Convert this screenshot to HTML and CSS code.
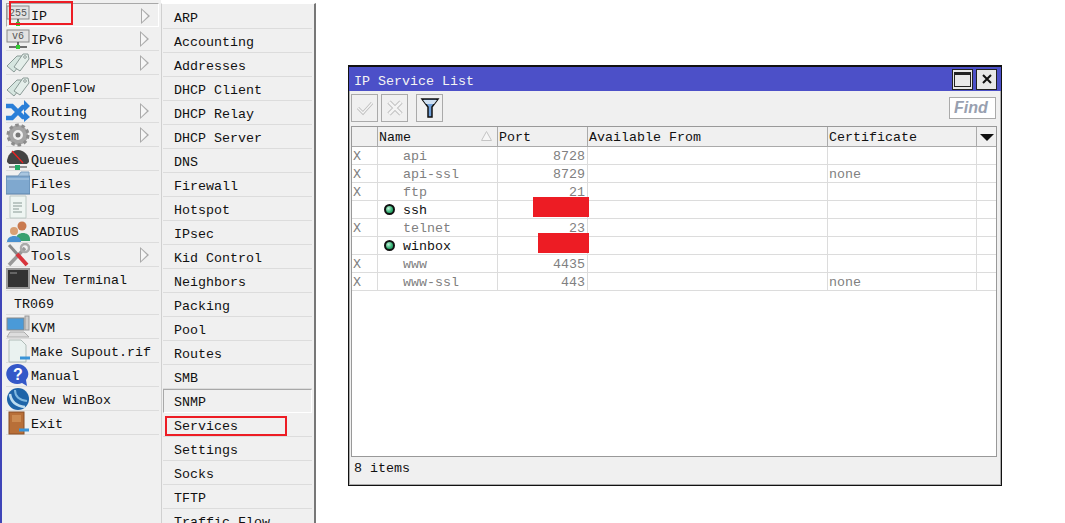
FILE: index.html
```html
<!DOCTYPE html>
<html lang="en">
<head>
  <meta charset="UTF-8">
  <title>IP Service List</title>
  <link rel="stylesheet" href="styles.css">
</head>
<body>
  <div class="menu main-menu">
    <div class="item hover">
      <svg class="icon" viewBox="0 0 24 24"><rect x="1" y="3" width="22" height="13" fill="#e2e2e2" stroke="#888"/><text x="12" y="13" class="icon-text">255</text><path d="M12 16v5M3 21h18" stroke="#444" stroke-width="1.5"/><rect x="10" y="19" width="4" height="4" fill="#3c3"/></svg>
      <span>IP</span><i class="arrow"></i><b class="mark mark-ip"></b>
    </div>
    <div class="item">
      <svg class="icon" viewBox="0 0 24 24"><rect x="1" y="3" width="22" height="12" fill="#e2e2e2" stroke="#888"/><text x="12" y="12" class="icon-text">v6</text><path d="M12 15v6M3 20h18" stroke="#444" stroke-width="1.5"/><rect x="10" y="18" width="4" height="4" fill="#3c3"/></svg>
      <span>IPv6</span><i class="arrow"></i>
    </div>
    <div class="item">
      <svg class="icon" viewBox="0 0 24 24"><path d="M1 15 11 5h5l1 5-9 11z" fill="#d6e6e0" stroke="#8a9a96"/><path d="M8 16 17 3h5l1 5-9 12z" fill="#e4eeea" stroke="#8a9a96"/><circle cx="19" cy="6" r="1.3" fill="#fff" stroke="#8a9a96"/></svg>
      <span>MPLS</span><i class="arrow"></i>
    </div>
    <div class="item">
      <svg class="icon" viewBox="0 0 24 24"><path d="M1 15 11 5h5l1 5-9 11z" fill="#d6e6e0" stroke="#8a9a96"/><path d="M8 16 17 3h5l1 5-9 12z" fill="#e4eeea" stroke="#8a9a96"/><circle cx="19" cy="6" r="1.3" fill="#fff" stroke="#8a9a96"/></svg>
      <span>OpenFlow</span>
    </div>
    <div class="item">
      <svg class="icon" viewBox="0 0 24 24"><path d="M0 7h6l11 11h2M0 19h6L17 8h2" fill="none" stroke="#2a7fd8" stroke-width="4.5"/><path d="M18 1l6 6-6 6zM18 12l6 6-6 5z" fill="#2a7fd8"/></svg>
      <span>Routing</span><i class="arrow"></i>
    </div>
    <div class="item">
      <svg class="icon" viewBox="0 0 24 24"><circle cx="12" cy="12" r="7.5" fill="none" stroke="#a4a4a4" stroke-width="5"/><circle cx="12" cy="12" r="10" fill="none" stroke="#8c8c8c" stroke-width="3" stroke-dasharray="3.5 2.8"/><circle cx="12" cy="12" r="2.5" fill="#777"/></svg>
      <span>System</span><i class="arrow"></i>
    </div>
    <div class="item">
      <svg class="icon" viewBox="0 0 24 24"><path d="M1 15a11 12 0 0 1 22 0l-2 2H3z" fill="#444"/><path d="M6 4l11 12" stroke="#e22" stroke-width="1.3"/><path d="M3 20h18" stroke="#333"/><rect x="9" y="18" width="5" height="5" fill="#2a6"/></svg>
      <span>Queues</span>
    </div>
    <div class="item">
      <svg class="icon" viewBox="0 0 24 24"><path d="M0 5h24v18H0z" fill="#7fa8cf" stroke="#5f86ad"/><path d="M12 5l3-4h8v4z" fill="#a9c6e0" stroke="#7fa0c0"/><path d="M1 8h22" stroke="#b8d0e6"/></svg>
      <span>Files</span>
    </div>
    <div class="item">
      <svg class="icon" viewBox="0 0 24 24"><path d="M4 1h16v22H4z" fill="#eef5f2" stroke="#bcc8c4"/><path d="M7 8h9M7 11h9M7 14h6M7 17h9" stroke="#aab8b4" stroke-width="1.5"/></svg>
      <span>Log</span>
    </div>
    <div class="item">
      <svg class="icon" viewBox="0 0 24 24"><circle cx="16" cy="7" r="4.5" fill="#c97a50"/><path d="M10 20c0-8 14-8 14 0v2H12z" fill="#3aa070"/><circle cx="8" cy="12" r="4" fill="#d9a074"/><path d="M1 23c0-8 14-8 14 0z" fill="#4a90d0"/></svg>
      <span>RADIUS</span>
    </div>
    <div class="item">
      <svg class="icon" viewBox="0 0 24 24"><path d="M3 22L19 5" stroke="#999" stroke-width="3.5"/><circle cx="19" cy="5" r="4" fill="none" stroke="#aaa" stroke-width="2.5"/><path d="M3 2l9 10" stroke="#888" stroke-width="3"/><path d="M11 11l10 11" stroke="#d8343c" stroke-width="4"/></svg>
      <span>Tools</span><i class="arrow"></i>
    </div>
    <div class="item">
      <svg class="icon" viewBox="0 0 24 24"><rect x="1" y="2" width="22" height="19" fill="#333" stroke="#999" stroke-width="2"/><path d="M4 6h7" stroke="#999"/></svg>
      <span>New Terminal</span>
    </div>
    <div class="item no-icon"><span>TR069</span></div>
    <div class="item">
      <svg class="icon" viewBox="0 0 24 24"><rect x="1" y="3" width="17" height="12" fill="#4a9ad8" stroke="#888"/><rect x="19" y="1" width="4" height="14" fill="#ccc" stroke="#999"/><path d="M1 22l3-5h14l5 5z" fill="#ddd" stroke="#aaa"/></svg>
      <span>KVM</span>
    </div>
    <div class="item">
      <svg class="icon" viewBox="0 0 24 24"><path d="M3 1h12l5 5v17H3z" fill="#eaf2f0" stroke="#b0bcb8"/><path d="M14 19h10" stroke="#3a94d8" stroke-width="3"/></svg>
      <span>Make Supout.rif</span>
    </div>
    <div class="item">
      <svg class="icon" viewBox="0 0 24 24"><path d="M12 1a11 10 0 1 0 4 19l5 3-1-6A11 10 0 0 0 12 1z" fill="#3458c8"/><text x="12" y="17" class="icon-help">?</text></svg>
      <span>Manual</span>
    </div>
    <div class="item">
      <svg class="icon" viewBox="0 0 24 24"><circle cx="12" cy="12" r="11" fill="#1e64a8"/><path d="M4 7c1 8 6 12 15 13" fill="none" stroke="#bcdcf0" stroke-width="2.5"/><path d="M9 3c0 6 4 10 12 11" fill="none" stroke="#7fb8e0" stroke-width="2"/></svg>
      <span>New WinBox</span>
    </div>
    <div class="item">
      <svg class="icon" viewBox="0 0 24 24"><rect x="3" y="1" width="15" height="22" fill="#b86f38" stroke="#8a4f24"/><rect x="6" y="4" width="9" height="7" fill="#cc8a50"/><path d="M13 19h10" stroke="#3a94d8" stroke-width="3"/></svg>
      <span>Exit</span>
    </div>
  </div>

  <div class="menu sub-menu">
    <div class="item">ARP</div>
    <div class="item">Accounting</div>
    <div class="item">Addresses</div>
    <div class="item">DHCP Client</div>
    <div class="item">DHCP Relay</div>
    <div class="item">DHCP Server</div>
    <div class="item">DNS</div>
    <div class="item">Firewall</div>
    <div class="item">Hotspot</div>
    <div class="item">IPsec</div>
    <div class="item">Kid Control</div>
    <div class="item">Neighbors</div>
    <div class="item">Packing</div>
    <div class="item">Pool</div>
    <div class="item">Routes</div>
    <div class="item">SMB</div>
    <div class="item hover">SNMP</div>
    <div class="item">Services<b class="mark mark-services"></b></div>
    <div class="item">Settings</div>
    <div class="item">Socks</div>
    <div class="item">TFTP</div>
    <div class="item">Traffic Flow</div>
  </div>

  <div class="window">
    <div class="titlebar">
      <span class="title">IP Service List</span>
      <div class="win-btn"><i class="max-glyph"></i></div>
      <div class="win-btn">
        <svg viewBox="0 0 12 12" width="12" height="12"><path d="M2 2l8 8M10 2l-8 8" stroke="#111" stroke-width="2"/></svg>
      </div>
    </div>
    <div class="toolbar">
      <div class="tool">
        <svg viewBox="0 0 20 20" width="20" height="20"><path d="M3 10l5 5 9-10" fill="none" stroke="#bbb" stroke-width="3"/><path d="M3 10l5 5 9-10" fill="none" stroke="#f4f4f4" stroke-width="1.4"/></svg>
      </div>
      <div class="tool">
        <svg viewBox="0 0 20 20" width="20" height="20"><path d="M4 4l12 12M16 4L4 16" stroke="#bbb" stroke-width="4.5"/><path d="M4 4l12 12M16 4L4 16" stroke="#f4f4f4" stroke-width="2.5"/></svg>
      </div>
      <div class="tool tool-filter">
        <svg viewBox="0 0 20 24" width="20" height="24"><path d="M2 3h16l-6 8v10H8V11z" fill="#6f9fd8" stroke="#111" stroke-width="1.5"/><path d="M3 4h14l-3 4H6z" fill="#cfe0f2"/></svg>
      </div>
      <div class="find">Find</div>
    </div>
    <div class="table">
      <div class="row head">
        <div class="cell"></div>
        <div class="cell">Name
          <svg class="sort" viewBox="0 0 11 10" width="11" height="10"><path d="M5.5 .5l5 9H.5z" fill="#f6f6f6" stroke="#c4c4c4"/></svg>
        </div>
        <div class="cell">Port</div>
        <div class="cell">Available From</div>
        <div class="cell">Certificate</div>
        <div class="cell"><i class="drop-arrow"></i></div>
      </div>
      <div class="row off">
        <div class="cell">X</div><div class="cell name">api</div><div class="cell port">8728</div><div class="cell"></div><div class="cell"></div><div class="cell"></div>
      </div>
      <div class="row off">
        <div class="cell">X</div><div class="cell name">api-ssl</div><div class="cell port">8729</div><div class="cell"></div><div class="cell">none</div><div class="cell"></div>
      </div>
      <div class="row off">
        <div class="cell">X</div><div class="cell name">ftp</div><div class="cell port">21</div><div class="cell"></div><div class="cell"></div><div class="cell"></div>
      </div>
      <div class="row">
        <div class="cell"></div><div class="cell name"><i class="dot"></i>ssh</div><div class="cell port"></div><div class="cell"></div><div class="cell"></div><div class="cell"></div>
      </div>
      <div class="row off">
        <div class="cell">X</div><div class="cell name">telnet</div><div class="cell port">23</div><div class="cell"></div><div class="cell"></div><div class="cell"></div>
      </div>
      <div class="row">
        <div class="cell"></div><div class="cell name"><i class="dot"></i>winbox</div><div class="cell port"></div><div class="cell"></div><div class="cell"></div><div class="cell"></div>
      </div>
      <div class="row off">
        <div class="cell">X</div><div class="cell name">www</div><div class="cell port">4435</div><div class="cell"></div><div class="cell"></div><div class="cell"></div>
      </div>
      <div class="row off">
        <div class="cell">X</div><div class="cell name">www-ssl</div><div class="cell port">443</div><div class="cell"></div><div class="cell">none</div><div class="cell"></div>
      </div>
      <b class="redact redact-ssh"></b>
      <b class="redact redact-winbox"></b>
    </div>
    <div class="status">8 items</div>
  </div>
</body>
</html>
```

FILE: styles.css
```css
html, body {
  margin: 0;
  height: 523px;
  overflow: hidden;
}

body {
  position: relative;
  display: flex;
  align-items: flex-start;
  background: #fff;
  color: #111;
  font-family: "Liberation Mono", monospace;
  font-size: 13.33px;
}

.menu {
  background: #f0f0f0;
  box-sizing: border-box;
}

.main-menu {
  width: 161px;
  height: 523px;
  padding: 3px 0 0 4px;
  border-left: 2px solid #3f45b8;
}

.main-menu .item {
  width: 153px;
  padding-top: 3px;
}

.sub-menu {
  width: 155px;
  height: 520px;
  margin-top: 3px;
  padding: 1px 2px 0 1px;
  border-top: 1px solid #fff;
  border-left: 1px solid #d0d0d0;
  border-right: 2px solid #777;
  overflow: hidden;
}

.sub-menu .item {
  padding: 3px 0 0 11px;
}

.item {
  position: relative;
  display: flex;
  align-items: center;
  box-sizing: border-box;
  height: 24px;
  border-bottom: 1px solid #dcdcdc;
  white-space: nowrap;
}

.item.hover {
  border-top: 1px solid #a8a8a8;
  border-left: 1px solid #a8a8a8;
  border-bottom: 1px solid #fff;
  border-right: 1px solid #fff;
}

.sub-menu .item.hover {
  padding: 2px 0 0 10px;
}

.main-menu .item.hover {
  padding-top: 2px;
}

.main-menu .item.hover .icon {
  margin-left: -1px;
}

.icon {
  flex: none;
  width: 24px;
  height: 24px;
  margin: -3px 1px 0 0;
}

.icon-text {
  font-size: 10px;
  font-family: "Liberation Mono", monospace;
  text-anchor: middle;
  fill: #555;
}

.icon-help {
  font-size: 16px;
  font-weight: bold;
  font-family: "Liberation Sans", sans-serif;
  text-anchor: middle;
  fill: #fff;
}

.no-icon {
  padding-left: 8px;
}

/* hollow submenu arrow */
.arrow {
  position: absolute;
  left: 134px;
  top: 4px;
  width: 0;
  height: 0;
  border-left: 9px solid #aaa;
  border-top: 8px solid transparent;
  border-bottom: 8px solid transparent;
}

.arrow::after {
  content: "";
  position: absolute;
  left: -8px;
  top: -6px;
  width: 0;
  height: 0;
  border-left: 6px solid #f6f6f6;
  border-top: 6px solid transparent;
  border-bottom: 6px solid transparent;
}

/* red boxes drawn over the screenshot */
.mark {
  position: absolute;
  box-sizing: border-box;
  border: 2px solid #ed1c24;
}

.mark-ip {
  left: 2px;
  top: -3px;
  width: 64px;
  height: 24px;
}

.mark-services {
  left: 2px;
  top: 3px;
  width: 122px;
  height: 20px;
}

.window {
  position: absolute;
  left: 348px;
  top: 65px;
  width: 654px;
  height: 421px;
  box-sizing: border-box;
  display: flex;
  flex-direction: column;
  border: 1px solid #111;
  border-top-width: 2px;
  background: #f0f0f0;
  box-shadow: inset 0 0 0 1px #aaa;
}

.titlebar {
  display: flex;
  align-items: center;
  gap: 3px;
  height: 24px;
  padding: 0 4px 0 5px;
  background: #4c50c8;
  color: #f4f4f4;
}

.title {
  flex: 1;
  padding-top: 5px;
}

.win-btn {
  display: flex;
  align-items: center;
  justify-content: center;
  box-sizing: border-box;
  width: 21px;
  height: 21px;
  border: 1px solid #222;
  background: #e8e8e8;
}

.max-glyph {
  box-sizing: border-box;
  width: 17px;
  height: 15px;
  border: 1px solid #222;
  border-top-width: 3px;
}

.toolbar {
  display: flex;
  align-items: flex-start;
  height: 32px;
  padding: 3px 5px 0 2px;
  box-sizing: border-box;
}

.tool {
  display: flex;
  align-items: center;
  justify-content: center;
  box-sizing: border-box;
  width: 27px;
  height: 28px;
  margin-right: 3px;
  border: 1px solid #aaa;
}

.tool-filter {
  margin-left: 5px;
}

.find {
  box-sizing: border-box;
  width: 47px;
  height: 22px;
  margin: 3px 0 0 auto;
  padding: 1px 0 0 4px;
  border: 1px solid #aaa;
  background: #fff;
  color: #98a0b0;
  font: italic bold 16px "Liberation Sans", sans-serif;
}

.table {
  position: relative;
  flex: 1;
  margin: 3px 4px 0 2px;
  border: 1px solid #999;
  background: #fff;
}

.row {
  display: grid;
  grid-template-columns: 26px 120px 90px 240px 149px 1fr;
  height: 18px;
  box-sizing: border-box;
  border-bottom: 1px solid #dcdcdc;
}

.row.head {
  height: 20px;
  background: #f0f0f0;
  border-bottom: 1px solid #aaa;
}

.head .cell {
  padding-top: 0;
  border-right-color: #aaa;
  line-height: 21px;
}

.cell {
  position: relative;
  box-sizing: border-box;
  padding: 1px 0 0 1px;
  border-right: 1px solid #dcdcdc;
  line-height: 18px;
  overflow: hidden;
}

.cell:last-child {
  border-right: 0;
}

.row.off {
  color: #808080;
}

.name {
  display: flex;
  align-items: flex-start;
  padding-left: 25px;
}

.port {
  padding-right: 2px;
  text-align: right;
}

.dot {
  position: absolute;
  left: 6px;
  top: 3px;
  box-sizing: border-box;
  width: 11px;
  height: 11px;
  border: 2px solid #111;
  border-radius: 50%;
  background: radial-gradient(circle at 35% 35%, #bff0d8, #2fae70 60%);
}

.sort {
  position: absolute;
  left: 103px;
  top: 4px;
}

.drop-arrow {
  position: absolute;
  left: 3px;
  top: 7px;
  width: 0;
  height: 0;
  border-left: 7px solid transparent;
  border-right: 7px solid transparent;
  border-top: 7px solid #111;
}

.redact {
  position: absolute;
  background: #ed1c24;
}

.redact-ssh {
  left: 181px;
  top: 70px;
  width: 56px;
  height: 20px;
}

.redact-winbox {
  left: 186px;
  top: 106px;
  width: 51px;
  height: 20px;
}

.status {
  display: flex;
  align-items: center;
  height: 28px;
  padding: 0 0 6px 5px;
  box-sizing: border-box;
}
```
